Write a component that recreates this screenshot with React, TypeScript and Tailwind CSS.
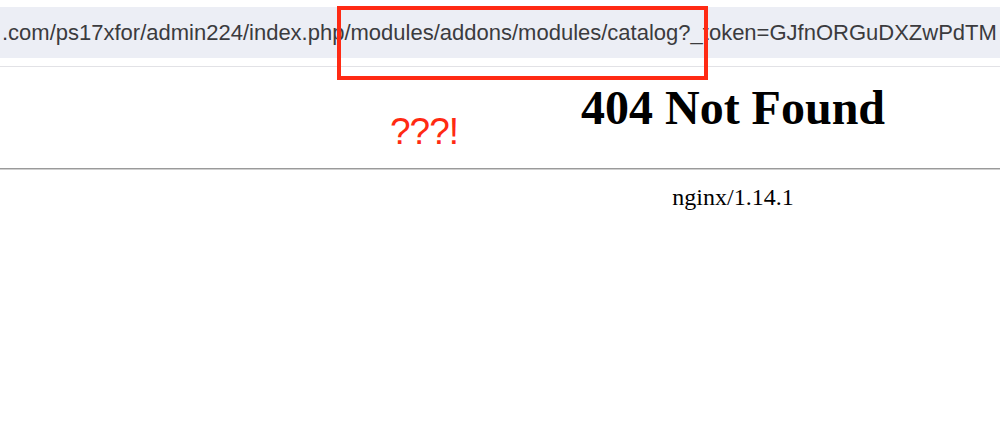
import React from 'react';

export default function App() {
  return (
    <div className="relative w-[1000px] h-[423px] overflow-hidden bg-white">
      {/* Browser address bar */}
      <div className="pt-[7px] h-[67px] border-b border-[#e2e2e6]">
        <div className="h-[51px] bg-[#eceef5] flex items-center pl-[2px] whitespace-nowrap overflow-hidden">
          <span className="text-[22px] leading-none text-[#3b3b3e] font-['Liberation_Sans',Arial,sans-serif]">
            .com/ps17xfor/admin224/index.php/modules/addons/modules/catalog?_token=GJfnORGuDXZwPdTM
          </span>
        </div>
      </div>

      {/* nginx error page */}
      <div className="w-[1466px] text-center text-black font-['Liberation_Serif','Times_New_Roman',serif]">
        <h1 className="mt-[17px] text-[48px] leading-[48px] font-bold">404 Not Found</h1>
        <hr className="mt-[36px] border-0 border-t-[1px] border-b-[1px] border-t-[#9a9a9a] border-b-[#cfcfcf]" />
        <div className="mt-[15px] text-[24px] leading-[24px]">nginx/1.14.1</div>
      </div>

      {/* Annotations */}
      <div className="absolute left-[337px] top-[6px] w-[371px] h-[74px] border-[4px] border-[#ff2a14]" />
      <div className="absolute left-[390px] top-[110px] text-[37px] leading-[44px] text-[#ff2a12] tracking-[-1px] font-['Liberation_Sans',Arial,sans-serif]">
        ???!
      </div>
    </div>
  );
}
